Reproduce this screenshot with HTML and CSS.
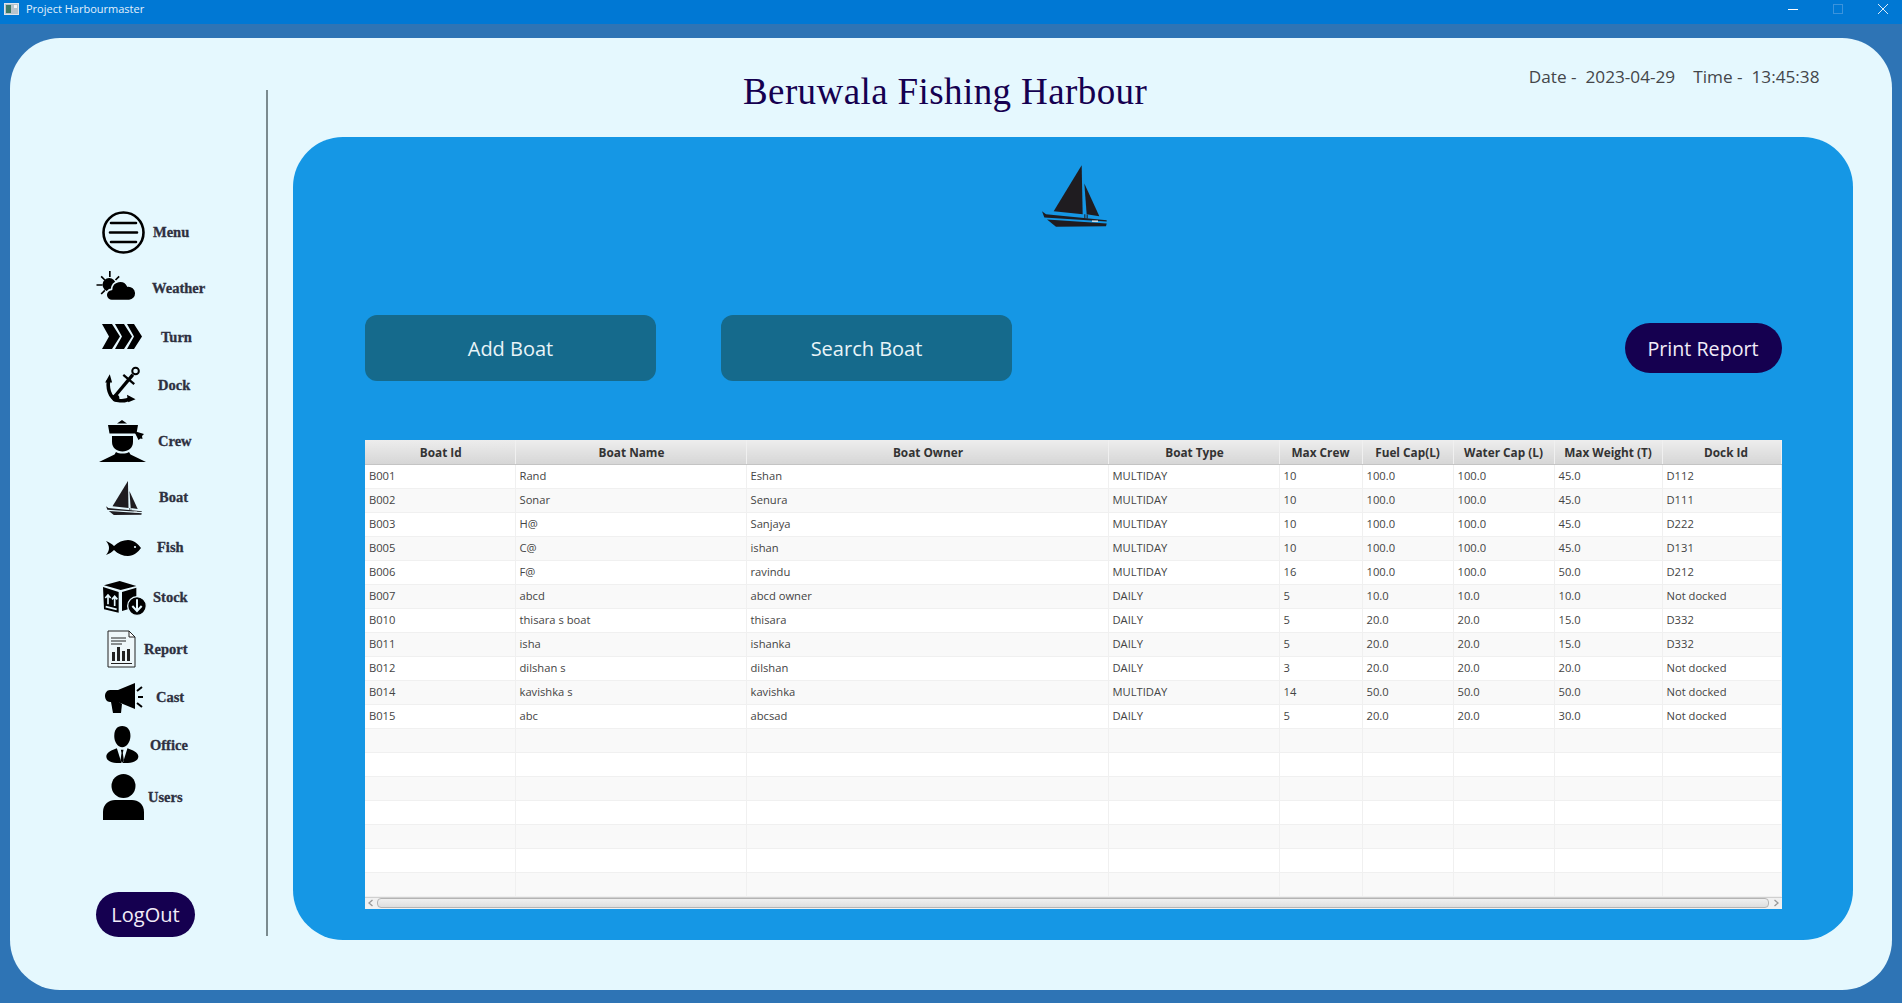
FILE: index.html
```html
<!DOCTYPE html>
<html>
<head>
    <title>Project Harbourmaster</title>
    <link rel="stylesheet" href="styles.css">
</head>
<body>
    <div class="titlebar">
        <svg class="app-icon" width="15" height="12" viewBox="0 0 15 12"><rect width="15" height="12" fill="#dfe4ea"/><rect x="1" y="1" width="13" height="10" fill="#b8c4cc"/><rect x="2" y="2" width="5" height="8" fill="#3d7a66"/><rect x="10" y="2" width="3" height="3" fill="#f2f4f6"/></svg>
        <span class="app-name">Project Harbourmaster</span>
        <div class="win-controls">
            <svg width="10" height="10" viewBox="0 0 10 10"><path d="M0 5.500h10" stroke="#fff" stroke-width="1"/></svg>
            <svg width="10" height="10" viewBox="0 0 10 10"><rect x=".5" y=".5" width="9" height="9" fill="none" stroke="#3b93dc" stroke-width="1"/></svg>
            <svg width="10" height="10" viewBox="0 0 10 10"><path d="M0 0l10 10M10 0L0 10" stroke="#dcecf8" stroke-width="1"/></svg>
        </div>
    </div>

    <div class="window">
        <div class="card">
            <aside class="sidebar">
                <nav class="side-nav">
                    <div class="nav-item nav-menu">
                        <svg width="43" height="43" viewBox="0 0 43 43"><circle cx="21.5" cy="21.5" r="20" fill="none" stroke="#000" stroke-width="2.600"/><path d="M9 12h25M8 21.500h27M9 31h25" stroke="#000" stroke-width="2.600" stroke-linecap="round"/></svg>
                        <span>Menu</span>
                    </div>
                    <div class="nav-item nav-weather">
                        <svg width="41" height="30" viewBox="48 213 120 90"><path d="M88 213v18M62 229l11 11M48 255h18M62 282l11-11M116 229l-11 11" stroke="#000" stroke-width="5"/><circle cx="86" cy="254" r="20" fill="#000"/><path d="M95 302A17 17 0 0 1 93 268A26 26 0 0 1 142 258A22 22 0 0 1 146 302Z" fill="#000" stroke="#e5f8fe" stroke-width="5"/></svg>
                        <span>Weather</span>
                    </div>
                    <div class="nav-item nav-turn">
                        <svg width="40" height="25" viewBox="0 0 40 25"><path d="M0 0h10l8 12.500L10 25H0l7-12.500zM13 0h9l8 12.500L22 25h-9l7-12.500zM25 0h7l8 12.500L32 25h-7l7-12.500z" fill="#000"/></svg>
                        <span>Turn</span>
                    </div>
                    <div class="nav-item nav-dock">
                        <svg width="35" height="38" viewBox="30 15 105 115"><circle cx="122" cy="30" r="10" fill="none" stroke="#000" stroke-width="6"/><path d="M114 41L58 108" stroke="#000" stroke-width="10"/><path d="M85 42l33 28" stroke="#000" stroke-width="7"/><path d="M40 58C36 95 50 118 75 120C88 121 100 118 108 112" fill="none" stroke="#000" stroke-width="11"/><path d="M44 40L30 65h21zM122 116L96 102l4 23z" fill="#000"/><circle cx="62" cy="112" r="11" fill="#000"/></svg>
                        <span>Dock</span>
                    </div>
                    <div class="nav-item nav-crew">
                        <svg width="47" height="42" viewBox="0 0 47 42"><path d="M23 0l5 3.500H18zM9 5h30l-1.500 8.500h-27z" fill="#000"/><path d="M35 11l10 3-2 2 .5 3-2-.5-2 1.500z" fill="#000"/><path d="M13 16h21v6c0 6-5 9.500-10.500 9.500S13 28 13 22z" fill="#000"/><path d="M17 32c3 2 10 2 13 0l1.500 2.500L47 42H0l15.500-7.500z" fill="#000"/></svg>
                        <span>Crew</span>
                    </div>
                    <div class="nav-item nav-boat">
                        <svg width="36" height="34" viewBox="0 0 195 185"><use href="#boat-shape"/></svg>
                        <span>Boat</span>
                    </div>
                    <div class="nav-item nav-fish">
                        <svg width="35" height="16" viewBox="0 0 35 16"><path d="M0 1c3 1 6 3 8 5 4-4 9-6 14-6 6 0 10 4 13 8-3 4-7 8-13 8-5 0-10-2-14-6-2 2-5 4-8 5 2-2 3-5 3-7s-1-5-3-7z" fill="#000"/><circle cx="29" cy="7" r="1.100" fill="#e5f8fe"/></svg>
                        <span>Fish</span>
                    </div>
                    <div class="nav-item nav-stock">
                        <svg width="45" height="36" viewBox="25 12 135 108"><path d="M75 15l50 15-47 12-50-14zM25 33l47 15v62l-44-10zM82 48l43-13v25l-25 40-18 5z" fill="#000"/><path d="M40 85V58M32 66l8-9 8 9M60 90V62M52 70l8-9 8 9M33 92l33 8" fill="none" stroke="#e5f8fe" stroke-width="5"/><circle cx="127" cy="90" r="28" fill="#000" stroke="#e5f8fe" stroke-width="4"/><path d="M127 70v30M113 90l14 15 14-15" fill="none" stroke="#e5f8fe" stroke-width="6"/></svg>
                        <span>Stock</span>
                    </div>
                    <div class="nav-item nav-report">
                        <svg width="29" height="38" viewBox="0 0 29 38"><path d="M1 1h21l6 6v30H1z" fill="#eef7fa" stroke="#222" stroke-width="1"/><path d="M22 1v6h6z" fill="#fff" stroke="#222" stroke-width="1"/><path d="M4 8h15M4 11h15M4 14h11M4 33.500h21" stroke="#222" stroke-width="1"/><path d="M5 22h3v9H5zM10 17h3v14h-3zM15 21h3v10h-3zM20 19h3v12h-3z" fill="#222"/></svg>
                        <span>Report</span>
                    </div>
                    <div class="nav-item nav-cast">
                        <svg width="38" height="30" viewBox="0 0 38 30"><path d="M30 0v26L13 19H5c-3 0-5-3-5-6s2-6 5-6h8z" fill="#000"/><path d="M6 19h8l3 2-1 9H8z" fill="#000"/><path d="M32 8l5-4M33 14h5M32 20l5 4" stroke="#000" stroke-width="2"/></svg>
                        <span>Cast</span>
                    </div>
                    <div class="nav-item nav-office">
                        <svg width="33" height="38" viewBox="78 378 98 115"><path d="M126 378C142 378 151 390 151 408C151 425 140 442 126 442C112 442 102 425 102 408C102 390 110 378 126 378Z" fill="#000"/><path d="M110 445L124 490C100 492 78 485 78 470C78 457 95 450 110 445ZM142 445L128 490C152 492 175 485 175 470C175 457 157 450 142 445Z" fill="#000"/><path d="M122 450h8l-2 10 3 22-5 8-5-8 3-22z" fill="#000"/></svg>
                        <span>Office</span>
                    </div>
                    <div class="nav-item nav-users">
                        <svg width="41" height="46" viewBox="0 0 41 46"><circle cx="20.500" cy="12" r="12" fill="#000"/><path d="M0 46V38c0-8 6-12 12-12h17c6 0 12 4 12 12v8z" fill="#000"/></svg>
                        <span>Users</span>
                    </div>
                </nav>
                <button class="logout-btn">LogOut</button>
            </aside>
            <div class="divider"></div>

            <main class="content">
                <header class="top-row">
                    <h1>Beruwala Fishing Harbour</h1>
                    <div class="clock"><span>Date -&nbsp; 2023-04-29</span><span>Time -&nbsp; 13:45:38</span></div>
                </header>

                <section class="panel">
                    <div class="panel-icon">
                        <svg width="65" height="62" viewBox="0 0 195 185"><use href="#boat-shape"/></svg>
                    </div>
                    <div class="actions">
                        <button class="action-btn">Add Boat</button>
                        <button class="action-btn">Search Boat</button>
                        <button class="print-btn">Print Report</button>
                    </div>

                    <div class="table-wrap">
                        <table class="boat-table">
                            <colgroup>
                                <col class="w1"><col class="w2"><col class="w3"><col class="w4"><col class="w5"><col class="w6"><col class="w7"><col class="w8"><col class="w9">
                            </colgroup>
                            <thead>
                                <tr><th class="nudge">Boat Id</th><th class="nudge">Boat Name</th><th class="nudge">Boat Owner</th><th class="nudge">Boat Type</th><th>Max Crew</th><th>Fuel Cap(L)</th><th>Water Cap (L)</th><th>Max Weight (T)</th><th class="dock-head">Dock Id</th></tr>
                            </thead>
                            <tbody>
                                <tr><td>B001</td><td>Rand</td><td>Eshan</td><td>MULTIDAY</td><td>10</td><td>100.0</td><td>100.0</td><td>45.0</td><td>D112</td></tr>
                                <tr><td>B002</td><td>Sonar</td><td>Senura</td><td>MULTIDAY</td><td>10</td><td>100.0</td><td>100.0</td><td>45.0</td><td>D111</td></tr>
                                <tr><td>B003</td><td>H@</td><td>Sanjaya</td><td>MULTIDAY</td><td>10</td><td>100.0</td><td>100.0</td><td>45.0</td><td>D222</td></tr>
                                <tr><td>B005</td><td>C@</td><td>ishan</td><td>MULTIDAY</td><td>10</td><td>100.0</td><td>100.0</td><td>45.0</td><td>D131</td></tr>
                                <tr><td>B006</td><td>F@</td><td>ravindu</td><td>MULTIDAY</td><td>16</td><td>100.0</td><td>100.0</td><td>50.0</td><td>D212</td></tr>
                                <tr><td>B007</td><td>abcd</td><td>abcd owner</td><td>DAILY</td><td>5</td><td>10.0</td><td>10.0</td><td>10.0</td><td>Not docked</td></tr>
                                <tr><td>B010</td><td>thisara s boat</td><td>thisara</td><td>DAILY</td><td>5</td><td>20.0</td><td>20.0</td><td>15.0</td><td>D332</td></tr>
                                <tr><td>B011</td><td>isha</td><td>ishanka</td><td>DAILY</td><td>5</td><td>20.0</td><td>20.0</td><td>15.0</td><td>D332</td></tr>
                                <tr><td>B012</td><td>dilshan s</td><td>dilshan</td><td>DAILY</td><td>3</td><td>20.0</td><td>20.0</td><td>20.0</td><td>Not docked</td></tr>
                                <tr><td>B014</td><td>kavishka s</td><td>kavishka</td><td>MULTIDAY</td><td>14</td><td>50.0</td><td>50.0</td><td>50.0</td><td>Not docked</td></tr>
                                <tr><td>B015</td><td>abc</td><td>abcsad</td><td>DAILY</td><td>5</td><td>20.0</td><td>20.0</td><td>30.0</td><td>Not docked</td></tr>
                                <tr><td></td><td></td><td></td><td></td><td></td><td></td><td></td><td></td><td></td></tr>
                                <tr><td></td><td></td><td></td><td></td><td></td><td></td><td></td><td></td><td></td></tr>
                                <tr><td></td><td></td><td></td><td></td><td></td><td></td><td></td><td></td><td></td></tr>
                                <tr><td></td><td></td><td></td><td></td><td></td><td></td><td></td><td></td><td></td></tr>
                                <tr><td></td><td></td><td></td><td></td><td></td><td></td><td></td><td></td><td></td></tr>
                                <tr><td></td><td></td><td></td><td></td><td></td><td></td><td></td><td></td><td></td></tr>
                                <tr><td></td><td></td><td></td><td></td><td></td><td></td><td></td><td></td><td></td></tr>
                            </tbody>
                        </table>
                        <div class="h-scroll">
                            <svg width="12" height="12" viewBox="0 0 12 12"><path d="M7.500 3L4 6l3.500 3" fill="none" stroke="#999" stroke-width="1.300"/></svg>
                            <div class="thumb"></div>
                            <svg width="12" height="12" viewBox="0 0 12 12"><path d="M4.500 3L8 6 4.500 9" fill="none" stroke="#999" stroke-width="1.300"/></svg>
                        </div>
                    </div>
                </section>
            </main>
        </div>
    </div>

    <svg class="defs" width="0" height="0">
        <defs>
            <g id="boat-shape" fill="#1f1c20">
                <path d="M119 0L35 138l87 9z"/>
                <path d="M127 55l45 98-38-6z"/>
                <path d="M0 138l12 9 182 18v4L7 157z"/>
                <path d="M15 163l179 12-2 8-150 2z"/>
                <path d="M127 147h3v12h-3zM134 148h3v12h-3z"/>
                <path d="M150 166h18v4h-18z" fill="#e8e8e8"/>
            </g>
        </defs>
    </svg>
</body>
</html>
```

FILE: styles.css
```css
* {
    box-sizing: border-box;
}

html, body {
    height: 100%;
}

body {
    margin: 0;
    background-color: #2e74b5;
    font-family: "Open Sans", "Noto Sans", sans-serif;
    display: flex;
    flex-direction: column;
    overflow: hidden;
}

.defs {
    position: absolute;
}

.titlebar {
    height: 24px;
    flex: none;
    background-color: #0078d4;
    display: flex;
    align-items: center;
    padding: 0 0 7px 4px;
    color: #e3f0fb;
    font-size: 11px;
}

.app-icon {
    margin-right: 7px;
}

.win-controls {
    margin-left: auto;
    display: flex;
    gap: 35px;
    padding-right: 14px;
}

.window {
    flex: 1;
    padding: 14px 10px 13px 10px;
}

.card {
    height: 952px;
    background-color: #e5f8fe;
    border-radius: 50px;
    display: flex;
}

/* left side */
.sidebar {
    width: 256px;
    flex: none;
    padding-top: 173px;
    display: flex;
    flex-direction: column;
}

.side-nav {
    display: flex;
    flex-direction: column;
}

.nav-item {
    display: flex;
    align-items: center;
    font-family: "Liberation Serif", serif;
    font-weight: bold;
    font-size: 14.5px;
    color: #2e3040;
    -webkit-text-stroke: 0.3px #2e3040;
}

.nav-item svg {
    flex: none;
}

.nav-menu { margin-left: 92px; gap: 8px; }
.nav-weather { margin-left: 86px; margin-top: 17px; gap: 15px; }
.nav-weather span { margin-top: 4px; }
.nav-turn { margin-left: 92px; margin-top: 23px; gap: 19px; }
.nav-turn span { margin-top: 2px; }
.nav-dock { margin-left: 95px; margin-top: 17px; gap: 18px; }
.nav-crew { margin-left: 89px; margin-top: 16px; gap: 12px; }
.nav-boat { margin-left: 96px; margin-top: 19px; gap: 17px; }
.nav-boat span { margin-bottom: 2px; }
.nav-fish { margin-left: 96px; margin-top: 24px; gap: 16px; }
.nav-stock { margin-left: 93px; margin-top: 24px; gap: 5px; }
.nav-stock span { margin-bottom: 2px; }
.nav-report { margin-left: 97px; margin-top: 14px; gap: 8px; }
.nav-cast { margin-left: 95px; margin-top: 15px; gap: 13px; }
.nav-cast span { margin-bottom: 2px; }
.nav-office { margin-left: 96px; margin-top: 13px; gap: 11px; }
.nav-users { margin-left: 93px; margin-top: 10px; gap: 4px; }

.logout-btn {
    align-self: flex-start;
    margin-left: 86px;
    margin-top: 72px;
    width: 99px;
    height: 45px;
    border: none;
    border-radius: 23px;
    background-color: #150050;
    color: #f2ecf8;
    font-family: "Open Sans", sans-serif;
    font-size: 20px;
}

.divider {
    width: 2px;
    height: 846px;
    flex: none;
    margin-top: 52px;
    background-color: #7b8b8f;
}

/* main part */
.content {
    flex: 1;
    padding: 0 40px 0 25px;
    display: flex;
    flex-direction: column;
}

.top-row {
    height: 99px;
    position: relative;
    display: flex;
    padding-left: 450px;
}

h1 {
    margin: 34px 0 0 0;
    font-family: "Liberation Serif", serif;
    font-weight: normal;
    font-size: 37px;
    letter-spacing: 0.4px;
    line-height: 40px;
    color: #150050;
}

.clock {
    position: absolute;
    right: 33px;
    top: 27px;
    display: flex;
    gap: 18px;
    font-size: 17.2px;
    color: #44464a;
}

.panel {
    height: 803px;
    background-color: #1597e5;
    border-radius: 50px;
    padding: 0 71px 0 72px;
    display: flex;
    flex-direction: column;
}

.panel-icon {
    height: 178px;
    padding-top: 28px;
    padding-left: 3px;
    display: flex;
    justify-content: center;
}

.actions {
    display: flex;
    align-items: center;
    gap: 65px;
    height: 66px;
}

.action-btn {
    width: 291px;
    height: 66px;
    border: none;
    border-radius: 12px;
    background-color: #156a8c;
    color: #e8f4f8;
    font-family: "Open Sans", sans-serif;
    font-size: 20px;
}

.print-btn {
    margin-left: auto;
    width: 157px;
    height: 50px;
    border: none;
    border-radius: 25px;
    background-color: #150050;
    color: #f2ecf8;
    font-family: "Open Sans", sans-serif;
    font-size: 19.700px;
}

.table-wrap {
    margin-top: 59px;
    height: 468px;
    background-color: #f4f4f4;
}

.boat-table {
    width: 100%;
    table-layout: fixed;
    border-collapse: collapse;
    font-size: 11.2px;
    color: #444;
}

.w1 { width: 150px; }
.w2 { width: 231px; }
.w3 { width: 362px; }
.w4 { width: 171px; }
.w5 { width: 83px; }
.w6 { width: 91px; }
.w7 { width: 101px; }
.w8 { width: 108px; }
.w9 { width: 119px; }

.boat-table th {
    height: 24px;
    padding: 0;
    background: linear-gradient(#ededed, #d6d6d6);
    border-right: 1px solid #f0f0f0;
    border-bottom: 1px solid #c4c4c4;
    font-size: 11.800px;
    font-weight: bold;
    color: #333;
}

.boat-table th.nudge {
    padding-left: 2px;
}

.boat-table th.dock-head {
    padding-left: 9px;
}

.boat-table td {
    height: 24px;
    padding: 0 4px 2px 4px;
    background-color: #fff;
    border-right: 1px solid #f0f0f0;
    border-bottom: 1px solid #f0f0f0;
    white-space: nowrap;
}

.boat-table tr:nth-child(even) td {
    background-color: #f9f9f9;
}

.h-scroll {
    height: 12px;
    border-top: 1px solid #d0d0d0;
    background-color: #f1f1f1;
    display: flex;
    align-items: center;
}

.h-scroll svg {
    flex: none;
}

.thumb {
    flex: 1;
    height: 10px;
    margin: 0 1px 0 0;
    border: 1px solid #b4b4b4;
    border-radius: 4px;
    background: linear-gradient(#f0f0f0, #dedede);
}
```
